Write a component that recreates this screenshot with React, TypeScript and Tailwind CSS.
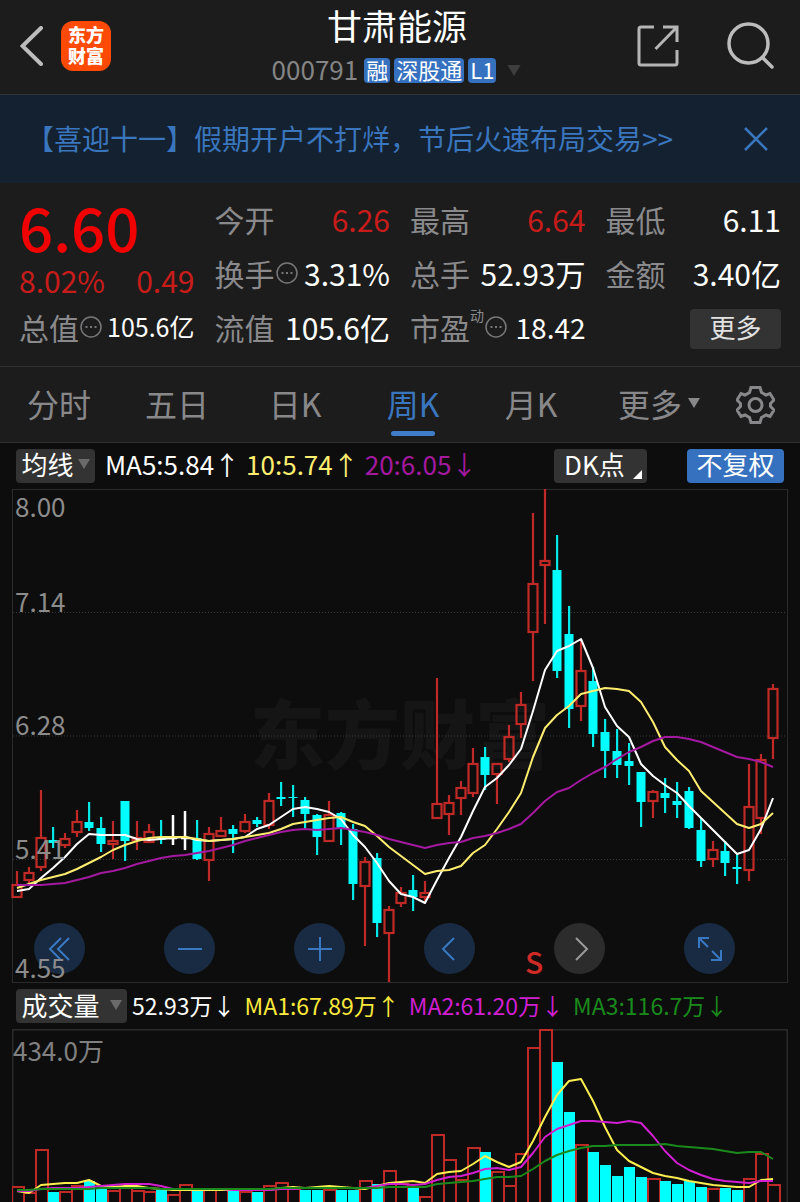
import { useState } from 'react';
import type { ReactNode } from 'react';

type Tone = 'up' | 'down' | 'flat';

// [tone, high, body top, body bottom, low]
type Candle = [Tone, number, number, number, number];

const UP = '#c02a26';
const DOWN = '#00ffff';

const FIRST_X = 17;
const STEP = 12;

const candles: Candle[] = [
  ['up', 871, 885, 897, 897],
  ['up', 867, 873, 880, 883],
  ['up', 790, 838, 867, 871],
  ['down', 827, 840, 843, 848],
  ['up', 833, 839, 845, 848],
  ['up', 810, 822, 832, 837],
  ['down', 802, 822, 828, 831],
  ['down', 817, 828, 844, 852],
  ['up', 821, 841, 844, 859],
  ['down', 801, 801, 841, 861],
  ['up', 821, 838, 840, 850],
  ['up', 824, 832, 842, 842],
  ['down', 820, 838, 840, 844],
  ['flat', 815, 837, 839, 845],
  ['flat', 811, 837, 839, 850],
  ['down', 820, 838, 859, 860],
  ['up', 827, 834, 860, 881],
  ['up', 817, 831, 836, 836],
  ['down', 825, 829, 834, 853],
  ['up', 814, 822, 831, 833],
  ['down', 817, 820, 824, 827],
  ['up', 793, 801, 825, 829],
  ['down', 782, 797, 799, 806],
  ['down', 785, 797, 798, 817],
  ['down', 797, 800, 814, 828],
  ['down', 814, 815, 837, 855],
  ['up', 801, 815, 841, 842],
  ['down', 812, 813, 828, 845],
  ['down', 824, 829, 884, 900],
  ['up', 857, 862, 886, 946],
  ['down', 853, 858, 923, 937],
  ['up', 906, 910, 933, 982],
  ['up', 887, 893, 903, 907],
  ['down', 875, 890, 897, 911],
  ['up', 881, 893, 897, 901],
  ['up', 678, 804, 818, 818],
  ['up', 795, 803, 814, 835],
  ['up', 781, 788, 798, 815],
  ['up', 748, 764, 793, 797],
  ['down', 747, 757, 775, 790],
  ['up', 763, 764, 774, 804],
  ['up', 725, 737, 759, 762],
  ['up', 692, 705, 724, 738],
  ['up', 513, 584, 632, 681],
  ['up', 489, 561, 565, 624],
  ['down', 535, 570, 671, 678],
  ['down', 606, 634, 709, 728],
  ['up', 640, 671, 706, 721],
  ['down', 667, 681, 734, 747],
  ['down', 719, 732, 751, 778],
  ['down', 729, 751, 765, 778],
  ['down', 743, 761, 766, 785],
  ['down', 772, 772, 802, 827],
  ['up', 790, 792, 801, 818],
  ['down', 778, 793, 798, 813],
  ['down', 782, 801, 805, 818],
  ['down', 787, 791, 828, 829],
  ['down', 818, 830, 861, 867],
  ['up', 841, 850, 859, 867],
  ['down', 841, 851, 863, 876],
  ['down', 853, 867, 869, 884],
  ['up', 764, 807, 870, 881],
  ['up', 754, 760, 818, 834],
  ['up', 684, 689, 738, 759],
];

const ma5 = [
  891, 889, 878, 868, 857, 844, 834, 835, 835, 835, 839, 840, 839, 838, 837, 840, 841, 840, 839, 837, 829, 825,
  817, 809, 807, 809, 812, 819, 835, 847, 863, 881, 894, 897, 903, 880, 858, 837, 811, 787, 778, 765, 749, 711,
  670, 651, 646, 639, 668, 707, 726, 737, 764, 776, 785, 793, 806, 818, 830, 842, 854, 850, 829, 798,
];

const ma10 = [
  888, 884, 880, 877, 874, 869, 863, 857, 850, 845, 841, 838, 837, 837, 837, 839, 841, 840, 839, 837, 835, 833,
  829, 824, 822, 820, 818, 817, 822, 826, 836, 847, 856, 865, 874, 871, 870, 866, 853, 845, 829, 812, 793, 757,
  728, 715, 706, 694, 691, 688, 689, 691, 702, 722, 747, 760, 771, 791, 802, 813, 824, 828, 824, 813,
];

const ma20 = [
  885, 885, 885, 884, 883, 880, 877, 873, 871, 868, 864, 861, 858, 856, 855, 853, 851, 848, 845, 841, 838, 835,
  832, 830, 829, 830, 829, 828, 830, 832, 835, 839, 842, 845, 848, 845, 843, 842, 838, 836, 833, 829, 824, 813,
  801, 792, 788, 780, 773, 767, 759, 752, 747, 741, 737, 737, 739, 742, 747, 752, 757, 759, 762, 767,
];

const volumes = [
  1187, 1193, 1150, 1192, 1192, 1186, 1181, 1189, 1191, 1187, 1191, 1192, 1190, 1195, 1185, 1191, 1190, 1189,
  1190, 1192, 1192, 1186, 1183, 1189, 1190, 1190, 1190, 1190, 1190, 1181, 1184, 1171, 1184, 1188, 1197, 1135,
  1160, 1180, 1148, 1152, 1172, 1186, 1154, 1048, 1030, 1062, 1112, 1145, 1152, 1165, 1176, 1167, 1177, 1179,
  1181, 1184, 1181, 1187, 1189, 1188, 1190, 1179, 1154, 1185,
];

const volumeDown = [
  3, 6, 7, 12, 15, 18, 20, 24, 25, 27, 28, 30, 33, 39, 45, 46, 48, 49, 50, 51, 52, 54, 55, 56, 57, 59, 60,
];

const volumeMa1 = [
  1191, 1193, 1185, 1184, 1183, 1183, 1180, 1186, 1187, 1186, 1186, 1188, 1189, 1190, 1190, 1190, 1190, 1190,
  1190, 1190, 1190, 1190, 1188, 1187, 1188, 1187, 1186, 1187, 1188, 1189, 1186, 1183, 1182, 1181, 1183, 1174,
  1172, 1171, 1164, 1156, 1162, 1167, 1162, 1141, 1117, 1095, 1081, 1079, 1101, 1127, 1150, 1161, 1167, 1173,
  1176, 1178, 1181, 1183, 1185, 1186, 1187, 1187, 1180, 1179,
];

const volumeMa2 = [
  1191, 1191, 1189, 1188, 1188, 1188, 1187, 1186, 1185, 1184, 1184, 1184, 1186, 1189, 1189, 1189, 1189, 1189,
  1190, 1190, 1190, 1190, 1189, 1189, 1188, 1188, 1188, 1188, 1188, 1188, 1186, 1184, 1184, 1185, 1184, 1180,
  1177, 1176, 1173, 1169, 1168, 1170, 1167, 1153, 1137, 1129, 1125, 1121, 1121, 1122, 1123, 1121, 1123, 1136,
  1151, 1163, 1170, 1175, 1179, 1181, 1182, 1183, 1181, 1181,
];

const volumeMa3 = [
  1190, 1190, 1189, 1189, 1189, 1189, 1189, 1188, 1188, 1188, 1188, 1188, 1189, 1189, 1189, 1189, 1189, 1189,
  1189, 1189, 1189, 1189, 1188, 1188, 1188, 1188, 1188, 1188, 1188, 1188, 1188, 1187, 1187, 1187, 1187, 1184,
  1183, 1182, 1181, 1179, 1177, 1177, 1176, 1169, 1161, 1155, 1151, 1148, 1146, 1146, 1145, 1145, 1145, 1145,
  1144, 1146, 1147, 1148, 1149, 1151, 1153, 1152, 1152, 1159,
];

const priceLabels = [
  { text: '8.00', y: 517 },
  { text: '7.14', y: 612 },
  { text: '6.28', y: 735 },
  { text: '5.41', y: 859 },
  { text: '4.55', y: 978 },
];

const periods = ['分时', '五日', '日K', '周K', '月K'];

const xOf = (i: number) => FIRST_X + i * STEP;
const toPoints = (ys: number[]) => ys.map((y, i) => `${xOf(i)},${y}`).join(' ');

function MaLine({ ys, color }: { ys: number[]; color: string }) {
  return <polyline points={toPoints(ys)} fill="none" stroke={color} strokeWidth="2" strokeLinejoin="round" />;
}

function CandleShape({ candle, x }: { candle: Candle; x: number }) {
  const [tone, high, top, bottom, low] = candle;
  if (tone === 'up') {
    return (
      <g stroke={UP} strokeWidth="2.2" fill="none">
        <path d={`M${x} ${high}V${top}M${x} ${bottom}V${low}`} />
        <rect x={x - 4.5} y={top} width="9" height={bottom - top} />
      </g>
    );
  }
  if (tone === 'flat') {
    return <path d={`M${x} ${high}V${low}M${x - 4} ${top + 1}h8`} stroke="#fff" strokeWidth="2.5" />;
  }
  return (
    <g fill={DOWN}>
      <rect x={x - 1} y={high} width="2.2" height={low - high} opacity="0.9" />
      <rect x={x - 4.5} y={top} width="9" height={bottom - top} />
    </g>
  );
}

function PriceChart() {
  return (
    <svg viewBox="12 489 776 494" className="pointer-events-none relative block h-auto w-full overflow-visible">
      <rect x="12.5" y="489.5" width="775" height="493" fill="none" stroke="#2a2a2a" />
      <text x="250" y="763" fontSize="75" fontWeight="900" fill="#151515">东方财富</text>
      {[612.5, 736, 859.5].map((y) => (
        <path key={y} d={`M13 ${y}H787`} stroke="#3a3a3a" strokeDasharray="1 2" />
      ))}
      {candles.map((candle, i) => (
        <CandleShape key={i} candle={candle} x={xOf(i)} />
      ))}
      <MaLine ys={ma5} color="#ffffff" />
      <MaLine ys={ma10} color="#fdee70" />
      <MaLine ys={ma20} color="#a3199f" />
      {priceLabels.map((label) => (
        <text key={label.text} x="15" y={label.y} fontSize="26" fill="#8c8c8c">{label.text}</text>
      ))}
      <text x="525" y="974" fontSize="30" fontWeight="500" fill="#cf2a26">S</text>
    </svg>
  );
}

function VolumeChart() {
  return (
    <svg viewBox="12 1029 776 173" className="block h-auto w-full">
      <path d="M12.5 1202V1029.5H787.5V1202" fill="none" stroke="#2a2a2a" strokeWidth="2" />
      {volumes.map((y, i) =>
        volumeDown.includes(i) ? (
          <rect key={i} x={xOf(i) - 5} y={y} width="11" height={1210 - y} fill={DOWN} />
        ) : (
          <rect key={i} x={xOf(i) - 5} y={y} width="12" height={1210 - y} fill="none" stroke={UP} strokeWidth="2" />
        )
      )}
      <MaLine ys={volumeMa1} color="#fdee50" />
      <MaLine ys={volumeMa2} color="#d01fd0" />
      <MaLine ys={volumeMa3} color="#1a8a1c" />
      <text x="13" y="1061" fontSize="26" fill="#808080">434.0万</text>
    </svg>
  );
}

function InfoDot() {
  return (
    <svg viewBox="0 0 22 22" className="ml-px size-[22px] shrink-0" fill="none" stroke="#77777a" strokeWidth="1.5">
      <circle cx="11" cy="11" r="10" />
      <path d="M5.5 11h2M10 11h2M14.5 11h2" strokeWidth="2" />
    </svg>
  );
}

const statSizes = {
  small: 'text-[25px]',
  medium: 'text-[28px]',
  large: 'text-[30px]',
};

interface StatProps {
  label: ReactNode;
  value: string;
  red?: boolean;
  info?: boolean;
  size?: keyof typeof statSizes;
}

function Stat({ label, value, red, info, size = 'large' }: StatProps) {
  return (
    <div className="flex h-[54px] items-center justify-between pb-1 whitespace-nowrap">
      <span className="flex items-center text-[30px] text-[#8a8a8d]">
        {label}
        {info && <InfoDot />}
      </span>
      <span className={`${statSizes[size]} ${red ? 'text-[#c81c1a]' : 'text-white'}`}>{value}</span>
    </div>
  );
}

function Triangle({ className }: { className: string }) {
  return (
    <svg viewBox="0 0 12 10" className={className} fill="currentColor">
      <path d="M0 0h12L6 10z" />
    </svg>
  );
}

function Tag({ children }: { children: string }) {
  return <span className="rounded bg-[#3671bf] px-0.5 pb-[3px] text-[22px] leading-[22px] text-white">{children}</span>;
}

function RoundButton({ label, muted, children }: { label: string; muted?: boolean; children: ReactNode }) {
  return (
    <button
      type="button"
      aria-label={label}
      className={`flex size-[51px] items-center justify-center rounded-full ${
        muted ? 'bg-[#2c2c2c] text-[#9a9a9a]' : 'bg-[#182b42] text-[#3a78c2]'
      }`}
    >
      <svg viewBox="0 0 30 30" className="size-[30px]" fill="none" stroke="currentColor" strokeWidth="2">
        {children}
      </svg>
    </button>
  );
}

function Header() {
  return (
    <header className="grid h-[95px] grid-cols-[1fr_auto_1fr] items-center border-b border-[#333] pr-[26px] pb-[3px] pl-5">
      <div className="flex items-center gap-4">
        <button type="button" aria-label="返回">
          <svg viewBox="0 0 25 40" className="h-10 w-[25px]" fill="none" stroke="#bdbdbd" strokeWidth="4" strokeLinecap="round">
            <path d="M21 2 2.5 20 21 38" />
          </svg>
        </button>
        <div className="flex size-[50px] flex-col items-center justify-center rounded-xl bg-[#ff4a05] pb-0.5 text-lg leading-[21px] font-black text-white">
          <span>东方</span>
          <span>财富</span>
        </div>
      </div>
      <div className="flex flex-col items-center self-start pt-0.5">
        <h1 className="text-[35px] leading-[46px] text-white">甘肃能源</h1>
        <div className="mt-2.5 flex items-center gap-1">
          <span className="mr-0.5 pb-1 text-[26px] leading-[21px] text-[#858585]">000791</span>
          <Tag>融</Tag>
          <Tag>深股通</Tag>
          <Tag>L1</Tag>
          <Triangle className="ml-1.5 h-[11px] w-4 text-[#3d3d3d]" />
        </div>
      </div>
      <div className="flex items-center justify-end gap-12">
        <button type="button" aria-label="分享">
          <svg viewBox="0 0 42 42" className="size-[42px]" fill="none" stroke="#b5b5b5" strokeWidth="3">
            <path d="M17 2H4a2 2 0 0 0-2 2v34a2 2 0 0 0 2 2h34a2 2 0 0 0 2-2V25" />
            <path d="M26 2h14v15M40 2 18.5 24" />
          </svg>
        </button>
        <button type="button" aria-label="搜索">
          <svg viewBox="0 0 47 47" className="size-[47px]" fill="none" stroke="#bcbcbc" strokeWidth="3.5" strokeLinecap="round">
            <circle cx="21.5" cy="21.5" r="19.5" />
            <path d="M35.5 35.5 45 45" />
          </svg>
        </button>
      </div>
    </header>
  );
}

function Notice({ onClose }: { onClose: () => void }) {
  return (
    <div className="flex h-[88px] items-center justify-between bg-[#142130] pr-8 pl-[26px] text-[28px] text-[#3a76be]">
      <a href="#promo" className="pb-0.5 whitespace-nowrap">
        {'【喜迎十一】假期开户不打烊\uff0c节后火速布局交易>>'}
      </a>
      <button type="button" aria-label="关闭" onClick={onClose}>
        <svg viewBox="0 0 24 24" className="size-6" fill="none" stroke="currentColor" strokeWidth="2.5">
          <path d="M1 1l22 22M23 1 1 23" />
        </svg>
      </button>
    </div>
  );
}

function Quote() {
  return (
    <section className="grid grid-cols-4 gap-x-5 border-b border-[#303030] px-[19px] pt-[11px] pb-2.5">
      <div className="row-span-2 flex flex-col whitespace-nowrap">
        <span className="text-[60px] leading-[64px] font-medium text-[#f00000]">6.60</span>
        <span className="flex justify-between text-[30px] leading-[44px] text-[#c81c1a]">
          <span>8.02%</span>
          <span>0.49</span>
        </span>
      </div>
      <Stat label="今开" value="6.26" red />
      <Stat label="最高" value="6.64" red />
      <Stat label="最低" value="6.11" />
      <Stat label="换手" value="3.31%" info />
      <Stat label="总手" value="52.93万" />
      <Stat label="金额" value="3.40亿" />
      <Stat label="总值" value="105.6亿" info size="small" />
      <Stat label="流值" value="105.6亿" />
      <Stat
        label={
          <>
            市盈<sup className="-top-3 text-sm">动</sup>
          </>
        }
        value="18.42"
        info
        size="medium"
      />
      <div className="flex items-center justify-end">
        <button type="button" className="h-10 w-[91px] rounded bg-[#333] pb-1 text-[26px] leading-9 text-[#e2e2e2]">更多</button>
      </div>
    </section>
  );
}

function PeriodTabs() {
  const [active, setActive] = useState('周K');

  return (
    <nav className="grid h-[76px] grid-cols-[repeat(5,118fr)_138fr_72fr] border-b border-[#303030] text-[32px] text-[#88888a]">
      {periods.map((period) => (
        <button
          key={period}
          type="button"
          onClick={() => setActive(period)}
          className={`relative pb-1 ${period === active ? 'text-[#3a76be]' : ''}`}
        >
          {period}
          {period === active && (
            <span className="absolute bottom-1.5 left-1/2 h-[5px] w-11 -translate-x-1/2 rounded-full bg-[#3f7dc9]" />
          )}
        </button>
      ))}
      <button type="button" className="flex items-center justify-center gap-1.5 pb-1">
        更多
        <Triangle className="h-2.5 w-3" />
      </button>
      <button type="button" aria-label="设置" className="flex items-center pl-2">
        <svg viewBox="0 0 39 40" className="h-10 w-[39px]" fill="none" stroke="currentColor" strokeWidth="3">
          <path d="M15 2.5H24L25.5 7.5 30 10 34 8.5 38 15 34.5 18.5V21.5L38 25 34 31.5 30 30 25.5 32.5 24 37.5H15L13.5 32.5 9 30 5 31.5 1 25 4.5 21.5V18.5L1 15 5 8.5 9 10 13.5 7.5Z" />
          <circle cx="19.5" cy="20" r="6.5" />
        </svg>
      </button>
    </nav>
  );
}

export default function App() {
  const [showNotice, setShowNotice] = useState(true);

  return (
    <div className="overflow-hidden bg-[#1c1c1c] font-['Noto_Sans_CJK_SC',sans-serif]">
      <Header />
      {showNotice && <Notice onClose={() => setShowNotice(false)} />}
      <Quote />
      <PeriodTabs />

      <main className="bg-[#0d0d0d] px-3">
        <div className="flex h-[46px] items-center justify-between px-1 text-[26px] leading-[30px] whitespace-nowrap">
          <div className="flex items-center gap-1.5">
            <button type="button" className="mr-1 flex h-[34px] w-[79px] items-center justify-center gap-1 rounded bg-[#333] pb-1 text-white">
              均线
              <Triangle className="h-2.5 w-3 text-[#6a6a6a]" />
            </button>
            <span className="pb-1 text-white">MA5:5.84↑</span>
            <span className="pb-1 text-[#fdee70]">10:5.74↑</span>
            <span className="pb-1 text-[#a3199f]">20:6.05↓</span>
          </div>
          <div className="flex items-center gap-10">
            <button type="button" className="flex h-[34px] w-[93px] items-center gap-2 rounded bg-[#333] pb-1 pl-2.5 text-white">
              DK点
              <svg viewBox="0 0 9 9" className="mb-1 size-[9px] shrink-0 self-end translate-y-1" fill="currentColor">
                <path d="M9 0v9H0z" />
              </svg>
            </button>
            <button type="button" className="h-[34px] w-[97px] rounded bg-[#3671bf] pb-1 text-white">不复权</button>
          </div>
        </div>

        <div className="relative">
          <div className="absolute inset-x-0 bottom-[9px] flex justify-between pr-[53px] pl-[22px]">
            <RoundButton label="最早">
              <path d="M16 4 5 15l11 11M24 4 13 15l11 11" />
            </RoundButton>
            <RoundButton label="缩小">
              <path d="M3 15h24" />
            </RoundButton>
            <RoundButton label="放大">
              <path d="M3 15h24M15 3v24" />
            </RoundButton>
            <RoundButton label="向左">
              <path d="M19 4 8 15l11 11" />
            </RoundButton>
            <RoundButton label="向右" muted>
              <path d="M11 4 22 15 11 26" />
            </RoundButton>
            <RoundButton label="全屏">
              <path d="M4 14V4h10M4 4l9 9M26 16v10H16M26 26l-9-9" />
            </RoundButton>
          </div>
          <PriceChart />
        </div>

        <div className="flex h-[46px] items-center gap-[9px] pl-1 text-[23px] whitespace-nowrap">
          <button type="button" className="-mr-1 flex h-[34px] w-[111px] items-center justify-center gap-2.5 rounded bg-[#333] pb-0.5 text-[26px] leading-8 text-white">
            成交量
            <Triangle className="h-2.5 w-3 text-[#6a6a6a]" />
          </button>
          <span className="pb-0.5 text-white">52.93万↓</span>
          <span className="pb-0.5 text-[#fbe93c]">MA1:67.89万↑</span>
          <span className="pb-0.5 text-[#d01fd0]">MA2:61.20万↓</span>
          <span className="pb-0.5 text-[#1a8a1c]">MA3:116.7万↓</span>
        </div>

        <VolumeChart />
      </main>
    </div>
  );
}
